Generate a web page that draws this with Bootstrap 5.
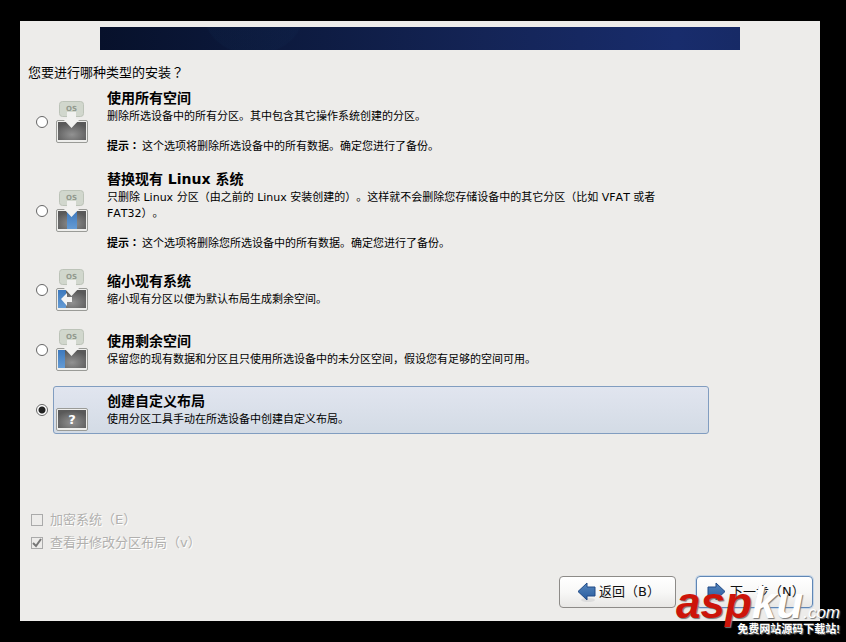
<!DOCTYPE html>
<html lang="zh-CN">
<head>
<meta charset="utf-8">
<meta name="viewport" content="width=device-width, initial-scale=1">
<title>安装类型</title>
<link href="https://cdn.jsdelivr.net/npm/bootstrap@5.3.0/dist/css/bootstrap.min.css" rel="stylesheet">
<style>
body{background:#000;color:#000;font:13px/16px "DejaVu Sans","Noto Sans CJK SC",sans-serif;font-kerning:none;text-spacing-trim:space-all;font-feature-settings:"chws" 0,"halt" 0;padding:21px 26px 21px 20px}
.wizard{background:#edecea}
.banner{height:23px;margin:6px 80px 0;background:radial-gradient(ellipse 50px 40px at 24% -12px,#183b641a 96%,transparent 100%),linear-gradient(90deg,#07112b,#0e1c43 35%,#142456 60%,#182c6c 90%,#172a66)}
.question{font-size:13px;line-height:16px;margin:15px 8px 3px}
.choices{margin:0 111px 0 16px}
.choice{gap:5px}
.gap-s{margin-bottom:5px}.gap-m{margin-bottom:9px}.gap-l{margin-bottom:12px}
.choice input,.tick input{width:12px;height:12px;margin:0;flex:none;background-color:#fff;border:1px solid #666;box-shadow:none}
.choice input:checked{background:radial-gradient(circle,#222 0 3px,#fff 4px);border-color:#666}
.panel-label{min-height:48px;padding:5px 40px 4px 2px;border:1px solid transparent;border-radius:3px;gap:19px}
.choice input:checked + .panel-label{border-color:#819dc0;background:linear-gradient(#e1e5ef,#d3dbe5)}
.disk{width:32px;height:42px;margin:-5px 0 -4px}
.choice-title{font-size:14px;font-weight:700;line-height:16px;margin-bottom:3px}
.choice-text{font-size:11px;line-height:16px}
.hint{margin-top:14px}
.hint b{margin-right:2px}
.ticks{margin:0 10px 25px 11px}
.tick{gap:7px;margin-bottom:7px;color:#b1b0ae;text-shadow:1px 1px #fff}
.tick input.form-check-input{background-color:#edecea;border:1px solid #aaa;border-radius:0;opacity:1}
.tick input:checked{background-size:12px;background-image:url("data:image/svg+xml,%3Csvg xmlns='http://www.w3.org/2000/svg' viewBox='0 0 12 12'%3E%3Cpath d='M2 6l3 3 5-7' fill='none' stroke='%23777' stroke-width='2'/%3E%3C/svg%3E")}
.tick .form-check-label{opacity:1!important}
.actions{gap:20px;padding:0 7px 13px}
.wizard-btn{width:117px;height:32px;padding:0 0 0 17px;font-size:13px;line-height:16px;color:#111;border:1px solid #8d8b88;border-radius:4px;background:linear-gradient(#fff,#f8f8f7 50%,#e8e7e5);gap:3px}
.wizard-btn.next{border-color:#5f86b5;box-shadow:0 0 0 1px #c6d6e7}
.stamp{right:6px;bottom:7px;font-family:"Liberation Sans","Noto Sans CJK SC",sans-serif;text-align:right;color:#fff;pointer-events:none;text-shadow:1px 1px 1px #777}
.stamp-logo{font-size:44px;line-height:44px;font-weight:700;font-style:italic;white-space:nowrap}
.stamp-logo .red{color:#cd1409}
.stamp-logo small{font-size:17px;font-weight:400}
.stamp-note{font-size:11px;line-height:12px;font-weight:700;margin-top:-12px}
</style>
<script src="https://cdn.jsdelivr.net/npm/bootstrap@5.3.0/dist/js/bootstrap.bundle.min.js"></script>
</head>
<body class="min-vh-100 d-flex position-relative">
<svg width="0" height="0" class="position-absolute" aria-hidden="true">
<defs>
<radialGradient id="metal" cx=".5" cy=".7" r=".65"><stop stop-color="#929292"/><stop offset="1" stop-color="#595959"/></radialGradient>
<linearGradient id="blue" x2="0" y2="1"><stop stop-color="#3d79bd"/><stop offset="1" stop-color="#659bd4"/></linearGradient>
<linearGradient id="arrow" x2="0" y2="1"><stop stop-color="#5686bd"/><stop offset="1" stop-color="#285c9f"/></linearGradient>
<g id="drive"><rect x=".5" y="19.5" width="31" height="22" rx="1.5" fill="#eeeeec" stroke="#9a9b97"/><rect x="2" y="21" width="28" height="18" fill="url(#metal)"/></g>
<g id="badge"><rect x="3.5" y=".5" width="24" height="15" rx="3" fill="#d1d7cd" stroke="#bcc3b8"/><text x="15.5" y="10" font-size="7" font-weight="700" text-anchor="middle" fill="#92998e" font-family="DejaVu Sans">OS</text></g>
<path id="down" d="M11 11h9v7h4l-8.500 9-8.500-9h4z" fill="#f1f1ef"/>
</defs>
</svg>
<main class="wizard flex-grow-1 d-flex flex-column">
<div class="banner"></div>
<h1 class="question fw-normal">您要进行哪种类型的安装<span lang="ja">？</span></h1>
<form class="d-flex flex-column flex-grow-1">
<div class="choices">
<div class="choice gap-s d-flex align-items-center">
<input class="form-check-input" type="radio" name="kind" id="k1">
<label class="panel-label d-flex align-items-center flex-grow-1" for="k1">
<svg class="disk flex-shrink-0" viewBox="0 0 32 42"><use href="#drive"/><use href="#badge"/><use href="#down"/></svg>
<span><span class="choice-title d-block">使用所有空间</span><span class="choice-text d-block">删除所选设备中的所有分区。其中包含其它操作系统创建的分区。</span><span class="choice-text hint d-block"><b>提示<span lang="ja">：</span></b>这个选项将删除所选设备中的所有数据。确定您进行了备份。</span></span>
</label></div>
<div class="choice gap-m d-flex align-items-center">
<input class="form-check-input" type="radio" name="kind" id="k2">
<label class="panel-label d-flex align-items-center flex-grow-1" for="k2">
<svg class="disk flex-shrink-0" viewBox="0 0 32 42"><use href="#drive"/><path d="M11 21h10v18H11z" fill="url(#blue)"/><use href="#badge"/><use href="#down"/></svg>
<span><span class="choice-title d-block">替换现有 Linux 系统</span><span class="choice-text d-block">只删除 Linux 分区（由之前的 Linux 安装创建的）。这样就不会删除您存储设备中的其它分区（比如 VFAT 或者 FAT32）。</span><span class="choice-text hint d-block"><b>提示<span lang="ja">：</span></b>这个选项将删除您所选设备中的所有数据。确定您进行了备份。</span></span>
</label></div>
<div class="choice gap-l d-flex align-items-center">
<input class="form-check-input" type="radio" name="kind" id="k3">
<label class="panel-label d-flex align-items-center flex-grow-1" for="k3">
<svg class="disk flex-shrink-0" viewBox="0 0 32 42"><use href="#drive"/><path d="M2 21h8v18H2z" fill="url(#blue)"/><use href="#badge"/><use href="#down"/><path d="M5 30l6-6v4h5v5h-5v4z" fill="#f4f4f3"/></svg>
<span><span class="choice-title d-block">缩小现有系统</span><span class="choice-text d-block">缩小现有分区以便为默认布局生成剩余空间。</span></span>
</label></div>
<div class="choice gap-l d-flex align-items-center">
<input class="form-check-input" type="radio" name="kind" id="k4">
<label class="panel-label d-flex align-items-center flex-grow-1" for="k4">
<svg class="disk flex-shrink-0" viewBox="0 0 32 42"><use href="#drive"/><path d="M2 21h7v18H2z" fill="url(#blue)"/><use href="#badge"/><use href="#down"/></svg>
<span><span class="choice-title d-block">使用剩余空间</span><span class="choice-text d-block">保留您的现有数据和分区且只使用所选设备中的未分区空间，假设您有足够的空间可用。</span></span>
</label></div>
<div class="choice d-flex align-items-center">
<input class="form-check-input" type="radio" name="kind" id="k5" checked>
<label class="panel-label d-flex align-items-center flex-grow-1" for="k5">
<svg class="disk flex-shrink-0" viewBox="0 0 32 42"><use href="#drive"/><text x="16" y="35" font-size="13" font-weight="700" text-anchor="middle" fill="#fff" font-family="DejaVu Sans">?</text></svg>
<span><span class="choice-title d-block">创建自定义布局</span><span class="choice-text d-block">使用分区工具手动在所选设备中创建自定义布局。</span></span>
</label></div>
</div>
<div class="ticks mt-auto">
<div class="tick d-flex align-items-center"><input class="form-check-input" type="checkbox" id="enc" disabled><label class="form-check-label" for="enc">加密系统（E）</label></div>
<div class="tick d-flex align-items-center mb-0"><input class="form-check-input" type="checkbox" id="rev" checked disabled><label class="form-check-label" for="rev">查看并修改分区布局（v）</label></div>
</div>
<div class="actions d-flex justify-content-end">
<button type="button" class="btn wizard-btn d-flex align-items-center"><svg class="flex-shrink-0" width="19" height="20" viewBox="0 0 19 20"><ellipse cx="11" cy="18" rx="7" ry="2" fill="#ddd"/><path d="M1 9.500l9-8.500v4h8v9h-8v4z" fill="url(#arrow)" stroke="#204a87"/></svg>返回（B）</button>
<button type="button" class="btn wizard-btn next d-flex align-items-center ps-2"><svg class="flex-shrink-0" width="22" height="20" viewBox="-2 0 22 20"><ellipse cx="8" cy="18" rx="7" ry="2" fill="#ddd"/><path d="M18 9.500l-9-8.500v4h-8v9h8v4z" fill="url(#arrow)" stroke="#204a87"/></svg>下一步（N）</button>
</div>
</form>
</main>
<div class="stamp position-absolute"><div class="stamp-logo"><span class="red">asp</span>ku<small>.com</small></div><div class="stamp-note">免费网站源码下载站!</div></div>
</body>
</html>
